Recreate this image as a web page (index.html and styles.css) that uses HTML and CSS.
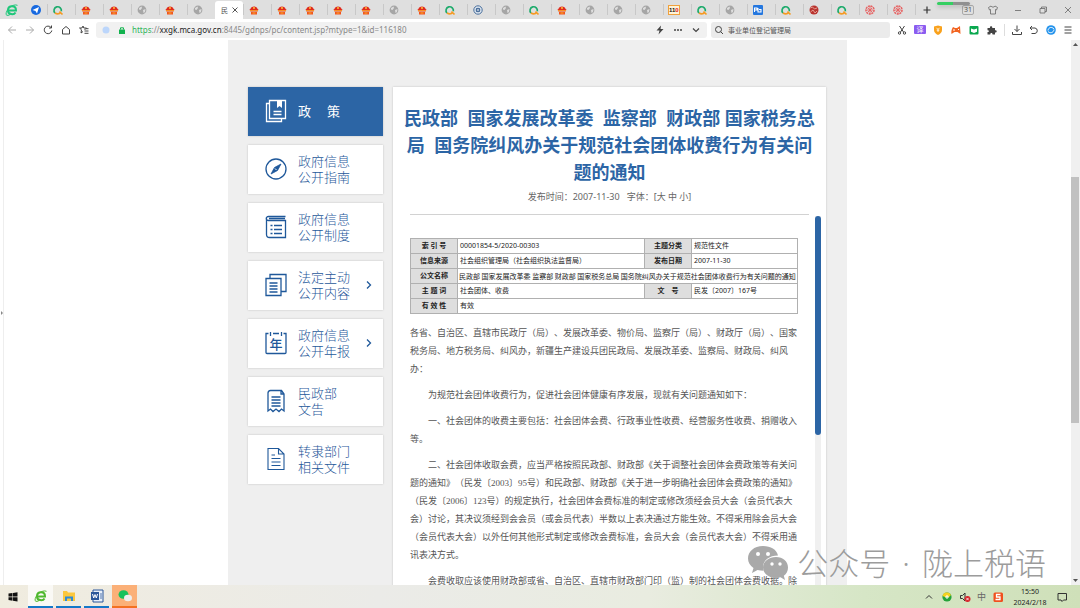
FILE: index.html
```html
<!doctype html>
<html lang="zh-CN">

<head>
  <meta charset="UTF-8" />
  <meta name="viewport" content="width=device-width, initial-scale=1.0" />
  <title>民政部 信息公开</title>
  <link rel="stylesheet" href="styles.css">
</head>

<body>
  <!-- 图标 -->
  <svg class="defs" aria-hidden="true">
    <symbol id="gov" viewBox="0 0 12 12">
      <path d="M2.500 5C2.500 1.500 9.500 1.500 9.500 5L10.500 5.500 9.500 7.500h-7L1.500 5.500Z" fill="#e02a1c" />
      <path d="M3 8h6v2.500H3z" fill="#f0541e" />
      <path d="M2 6.700h8M4.500 9h3" stroke="#ffb62b" stroke-width=".9" />
      <circle cx="6" cy="4" r=".9" fill="#ffd23c" />
    </symbol>
    <symbol id="globe" viewBox="0 0 12 12">
      <circle cx="6" cy="6" r="4.400" fill="#a6a6a6" />
      <path d="M3 4l2.500-1.500L6 4 4.500 6 3 5.500zM7 6l2.500-1L9 8 7.500 9z" fill="#dedede" />
    </symbol>
    <symbol id="query" viewBox="0 0 12 12">
      <path d="M3 9A3.700 3.700 0 1 1 9.300 7.300" fill="none" stroke="#1eab6c" stroke-width="1.700" />
      <path d="M3 9c2 1.300 4.500.9 6-1M7.500 7.500l3 3" fill="none" stroke="#f59a23" stroke-width="1.700" />
    </symbol>
    <symbol id="emblem" viewBox="0 0 12 12">
      <circle cx="6" cy="6" r="4.200" fill="#dce5ef" stroke="#4a6f9c" stroke-width="1" />
      <circle cx="6" cy="6" r="2.300" fill="#295387" />
      <path d="M4.500 6h3M6 4.500v3" stroke="#fff" stroke-width=".7" />
    </symbol>
    <symbol id="card" viewBox="0 0 12 12">
      <rect x="1" y="1" width="10" height="10" rx="1" fill="#2477df" />
      <path d="M2.500 8V4H5v2H3M6 4v4h3V5.500H7" fill="none" stroke="#fff" stroke-width="1.100" />
    </symbol>
    <symbol id="ball" viewBox="0 0 12 12">
      <circle cx="6" cy="6" r="4.500" fill="#b9342f" />
      <path d="M2.500 4l2-1 2 2 2.500-1M2.500 8l2.500-2 2 3 2-2" fill="none" stroke="#e9a89d" stroke-width=".9" />
    </symbol>
    <symbol id="seal" viewBox="0 0 12 12">
      <circle cx="6" cy="6" r="4" fill="none" stroke="#e66262" stroke-width="1.600" stroke-dasharray="2 .7" />
      <path d="M3 6h6M6 2v8M4 4l4 4M8 4L4 8" stroke="#e66262" stroke-width=".9" />
    </symbol>
    <symbol id="browser" viewBox="0 0 14 14">
      <path d="M3 7.400h8C11 2 3 2 3 7.400c0 4.500 6 4.700 7.500 2" fill="none" stroke="currentColor" stroke-width="2" />
      <path d="M1 11.500C1 6 8 .5 12.500 2.300M1 11.500c1 1.500 3 .8 4 0" fill="none" stroke="currentColor" stroke-width="1" />
    </symbol>
    <symbol id="chats" viewBox="0 0 42 36">
      <path d="M16 1C7 1 1 6.500 1 13.500c0 4 2 7 5.500 9.500L5 28l5.500-3c2 .6 4 .8 6 .8C14 17 21 10.500 31 10.500 29.500 4.500 24 1 16 1z" />
      <path d="M29 12c-7 0-13 4.500-13 10.500S22 33 29 33c1.500 0 3-.2 4.500-.7L38 35l-1.200-4.200C39.500 28.800 41 26 41 22.500 41 16.500 36 12 29 12z" />
      <g class="eyes">
        <circle cx="11" cy="9" r="2" />
        <circle cx="21" cy="9" r="2" />
        <circle cx="25" cy="19" r="1.700" />
        <circle cx="33" cy="19" r="1.700" />
      </g>
    </symbol>
    <symbol id="arrow" viewBox="0 0 8 10">
      <path d="M2 1.500L5.500 5 2 8.500" fill="none" stroke="currentColor" stroke-width="1.300" />
    </symbol>
  </svg>

  <header class="browser">
    <div class="tab-bar">
      <svg class="logo"><use href="#browser" /></svg>
      <svg class="pin" viewBox="0 0 12 12"><circle cx="6" cy="6" r="5" fill="#1769e0" /><path d="M2.500 6l6.500-3-2 6.500-1.500-2.500z" fill="#fff" /></svg>
      <nav class="tabs">
        <button class="tab" aria-label="标签"><svg><use href="#query" /></svg></button>
        <button class="tab" aria-label="标签"><svg><use href="#gov" /></svg></button>
        <button class="tab" aria-label="标签"><svg><use href="#gov" /></svg></button>
        <button class="tab" aria-label="标签"><svg><use href="#globe" /></svg></button>
        <button class="tab" aria-label="标签"><svg><use href="#gov" /></svg></button>
        <button class="tab" aria-label="标签"><svg><use href="#globe" /></svg></button>
        <button class="tab active"><span class="tab-title">民</span><svg class="tab-close" viewBox="0 0 8 8"><path d="M2 2l4 4M6 2L2 6" stroke="#555" stroke-width=".8" /></svg></button>
        <button class="tab" aria-label="标签"><svg><use href="#gov" /></svg></button>
        <button class="tab" aria-label="标签"><svg><use href="#gov" /></svg></button>
        <button class="tab" aria-label="标签"><svg><use href="#gov" /></svg></button>
        <button class="tab" aria-label="标签"><svg><use href="#gov" /></svg></button>
        <button class="tab" aria-label="标签"><svg><use href="#gov" /></svg></button>
        <button class="tab" aria-label="标签"><svg><use href="#globe" /></svg></button>
        <button class="tab" aria-label="标签"><svg><use href="#gov" /></svg></button>
        <button class="tab" aria-label="标签"><svg><use href="#query" /></svg></button>
        <button class="tab" aria-label="标签"><svg><use href="#emblem" /></svg></button>
        <button class="tab" aria-label="标签"><svg><use href="#globe" /></svg></button>
        <button class="tab" aria-label="标签"><svg><use href="#query" /></svg></button>
        <button class="tab" aria-label="标签"><svg><use href="#gov" /></svg></button>
        <button class="tab" aria-label="标签"><svg><use href="#globe" /></svg></button>
        <button class="tab" aria-label="标签"><svg><use href="#globe" /></svg></button>
        <button class="tab" aria-label="标签"><svg><use href="#globe" /></svg></button>
        <button class="tab"><span class="police">11<b>0</b></span></button>
        <button class="tab" aria-label="标签"><svg><use href="#query" /></svg></button>
        <button class="tab" aria-label="标签"><svg><use href="#globe" /></svg></button>
        <button class="tab" aria-label="标签"><svg><use href="#card" /></svg></button>
        <button class="tab" aria-label="标签"><svg><use href="#query" /></svg></button>
        <button class="tab" aria-label="标签"><svg><use href="#ball" /></svg></button>
        <button class="tab" aria-label="标签"><svg><use href="#query" /></svg></button>
        <button class="tab" aria-label="标签"><svg><use href="#seal" /></svg></button>
        <button class="tab" aria-label="标签"><svg><use href="#seal" /></svg></button>
        <button class="tab new-tab" aria-label="新标签"><svg viewBox="0 0 12 12"><path d="M6 2.500v7M2.500 6h7" stroke="#333" stroke-width="1.200" /></svg></button>
      </nav>
      <div class="window-tools">
        <span class="count">31</span>
        <svg viewBox="0 0 12 12"><path d="M4 2L1.500 3.500l1 2.500 1-.5V10h5V5.500l1 .5 1-2.500L8 2C7 3.500 5 3.500 4 2z" /></svg>
        <svg viewBox="0 0 12 12"><path d="M3 6.500h6" /></svg>
        <svg viewBox="0 0 12 12"><path d="M3 4.500h5V9H3zM4.500 4.500V3H9.500v4.500H8" /></svg>
        <svg viewBox="0 0 12 12"><path d="M3 3l6 6M9 3L3 9" /></svg>
      </div>
      <span class="speed"></span>
    </div>

    <div class="toolbar">
      <div class="nav-tools">
        <svg class="dim" viewBox="0 0 12 12"><path d="M10 6H2.500M6 2.500L2.500 6 6 9.500" /></svg>
        <svg class="dim" viewBox="0 0 12 12"><path d="M2 6h7.500M6 2.500L9.500 6 6 9.500" /></svg>
        <svg viewBox="0 0 12 12"><path d="M9 3.500a3.800 3.800 0 1 0 .8 3M9.500 1.500V4H7" /></svg>
        <svg viewBox="0 0 12 12"><path d="M2.500 5.500L6 2.500l3.500 3V10h-7z" /></svg>
        <svg viewBox="0 0 12 12"><path d="M5 2l.8 2h2.700L6.500 6M5 2l-1 2H1.500l2 1.800L3 9l2-1.500M6.500 7h4M6.500 9.300h4M8 4.700h2.500" /></svg>
      </div>
      <div class="address">
        <svg viewBox="0 0 12 12"><circle cx="6" cy="6" r="3.500" fill="#bcd6fb" /></svg>
        <svg viewBox="0 0 12 12"><path d="M3 5.500h6V10H3z" fill="#12b24e" /><path d="M4.500 5.500V3.800h3v1.700" fill="none" stroke="#12b24e" /></svg>
        <span class="url"><i>https</i>://<b>xxgk.mca.gov.cn</b>:8445/gdnps/pc/content.jsp?mtype=1&amp;id=116180</span>
        <div class="address-tools">
          <svg viewBox="0 0 12 12"><path d="M7 1.500L2.500 6.500h3L4.500 10.500 9.500 5H6.500z" fill="#444" /></svg>
          <svg viewBox="0 0 12 12"><path d="M2 6h2M5 6h2M8 6h2" stroke="#444" stroke-width="1.500" /></svg>
          <svg viewBox="0 0 12 12"><path d="M3 4.500l3 3 3-3" fill="none" stroke="#444" stroke-width="1.200" /></svg>
        </div>
      </div>
      <label class="search">
        <svg viewBox="0 0 12 12"><circle cx="5.500" cy="5.500" r="3" /><path d="M7.700 7.700L10 10" /></svg>
        <input type="text" value="事业单位登记管理局" aria-label="搜索">
      </label>
      <div class="extensions">
        <svg viewBox="0 0 12 12"><path d="M3.500 2l4 6M8.500 2l-4 6" /><circle cx="3.500" cy="9" r="1.200" /><circle cx="8.500" cy="9" r="1.200" /></svg>
        <span class="translate">译</span>
        <svg viewBox="0 0 12 12"><path d="M6 1.500l4 1v3.500C10 8.500 8 10 6 11 4 10 2 8.500 2 6V2.500z" fill="#f9a11b" stroke="none" /><path d="M4.500 3.800L6 5.500l1.500-1.700M6 5.500V8M4.700 6.200h2.600" stroke="#fff" stroke-width=".8" /></svg>
        <svg viewBox="0 0 12 12"><path d="M3 3l2 1h2l3-2 .5 8-3-2h-3l-3 2C1 8 1.500 5 3 3z" fill="#f26522" stroke="none" /><path d="M3 6h2M8 5.500h1" stroke="#fff" /></svg>
        <svg viewBox="0 0 12 12"><rect x="1.500" y="2" width="9" height="8.500" rx="1" fill="#0aa84f" stroke="none" /><path d="M3 4.500l3 1 3-1v3.300L6 9 3 7.800z" fill="#fff" stroke="none" /></svg>
        <svg viewBox="0 0 12 12"><path d="M1.500 4h2.500c-.8-2.500 3-2.500 2.200 0H9v2.300c2.300-.6 2.300 2.700 0 2.200v2H6.500c.3-2-2.500-2-2.200 0H1.500V8c2 .3 2-2 0-1.800z" fill="#444" stroke="none" /></svg>
      </div>
      <div class="actions">
        <svg viewBox="0 0 12 12"><path d="M6 1.500v6M3.500 5L6 7.500 8.500 5M1.500 8v2.500h9V8" /></svg>
        <svg viewBox="0 0 12 12"><path d="M4 2L2 4l2 2M2 4h5a2.800 2.800 0 0 1 0 5.500H3.500" /></svg>
        <svg viewBox="0 0 12 12"><circle cx="6" cy="6" r="4.800" fill="#2493ec" stroke="none" /><path d="M3 6.500C3.500 3 7 2.500 9 5M9 5.500C8.500 9 5 9.500 3 7.500" stroke="#fff" /></svg>
        <svg viewBox="0 0 12 12"><path d="M2.500 3h7M2.500 6h7M2.500 9h7" /></svg>
      </div>
    </div>
  </header>

  <main class="viewport">
    <div class="handle"><svg viewBox="0 0 4 6"><path d="M1 1l2 2-2 2z" fill="#888" /></svg></div>
    <div class="page">
      <nav class="side">
        <a class="side-item current" href="#">
          <svg viewBox="0 0 22 24"><path d="M4.500 1.500h16v18h-16zM4.500 4.500h-3v18h15v-3M8.500 12.500h8M8.500 15.500h8" /><path d="M12 1.500h5v7.500L14.500 7 12 9z" fill="currentColor" stroke="none" /></svg>
          <span>政<i></i>策</span>
        </a>
        <a class="side-item" href="#">
          <svg viewBox="0 0 22 24"><circle cx="11" cy="12" r="10" /><path d="M16 7l-3.500 6.500L6 17l3.500-6.500z" fill="currentColor" stroke-width=".8" /><path d="M10 11.500l1.500 1.500" stroke="#fff" stroke-width="1" /></svg>
          <span>政府信息<br>公开指南</span>
        </a>
        <a class="side-item" href="#">
          <svg viewBox="0 0 22 24"><path d="M20.500 1.500h-17c-3 0-3 4 0 4h17v17h-16c-2 0-3-1-3-3v-16M4 3.500h16M5.500 10.500h2M9 10.500h8M5.500 14.500h2M9 14.500h8M5.500 18.500h2M9 18.500h8" /></svg>
          <span>政府信息<br>公开制度</span>
        </a>
        <a class="side-item" href="#">
          <svg viewBox="0 0 22 24"><path d="M1 5.500h15v17H1zM5 5.500v-4h16v17h-5M4.500 10h8M4.500 13h8M4.500 16h8M4.500 19h8" /></svg>
          <span>法定主动<br>公开内容</span>
          <svg class="more"><use href="#arrow" /></svg>
        </a>
        <a class="side-item" href="#">
          <svg viewBox="0 0 22 24"><path d="M3.500 2.500H1v19q0 1 1 1h18q1 0 1-1v-19h-2.500M8 2.500h6M5.500 1v4M16.500 1v4" /><text class="year" x="11" y="18" text-anchor="middle">年</text></svg>
          <span>政府信息<br>公开年报</span>
          <svg class="more"><use href="#arrow" /></svg>
        </a>
        <a class="side-item" href="#">
          <svg viewBox="0 0 22 24"><path d="M3 22V4q0-2.500 2.500-2.500h11L19 5v17l-2.500-2-2.500 2.500-3-2.500-3 2.500L5.500 20zM16 1.500V5h3M6.500 8h9M6.500 11h9M6.500 14h9M6.500 17h9" /></svg>
          <span>民政部<br>文告</span>
        </a>
        <a class="side-item" href="#">
          <svg class="thin" viewBox="0 0 22 24"><path d="M3 1.500h10.500L19 7v15.500H3zM13.500 1.500V7H19M6.500 8H10M6.500 11.500h9M6.500 15h9M6.500 18.500h9" /></svg>
          <span>转隶部门<br>相关文件</span>
        </a>
      </nav>

      <article class="article">
        <h1>民政部&nbsp; 国家发展改革委&nbsp; 监察部&nbsp; 财政部 国家税务总局&nbsp; 国务院纠风办关于规范社会团体收费行为有关问题的通知</h1>
        <p class="meta"><span>发布时间：2007-11-30</span><span>字体：[<a href="#">大</a> <a href="#">中</a> <a href="#">小</a>]</span></p>
        <div class="content">
          <div class="text">
            <table>
              <colgroup>
                <col class="c-label">
                <col>
                <col class="c-label">
                <col class="c-value">
              </colgroup>
              <tr>
                <th>索 引 号</th>
                <td>00001854-5/2020-00303</td>
                <th>主题分类</th>
                <td>规范性文件</td>
              </tr>
              <tr>
                <th>信息来源</th>
                <td>社会组织管理局（社会组织执法监督局）</td>
                <th>发布日期</th>
                <td>2007-11-30</td>
              </tr>
              <tr>
                <th>公文名称</th>
                <td class="name" colspan="3">民政部 国家发展改革委 监察部 财政部 国家税务总局 国务院纠风办关于规范社会团体收费行为有关问题的通知</td>
              </tr>
              <tr>
                <th>主 题 词</th>
                <td>社会团体、收费</td>
                <th>文&emsp;号</th>
                <td>民发〔2007〕167号</td>
              </tr>
              <tr>
                <th>有 效 性</th>
                <td colspan="3">有效</td>
              </tr>
            </table>
            <p class="to">各省、自治区、直辖市民政厅（局）、发展改革委、物价局、监察厅（局）、财政厅（局）、国家税务局、地方税务局、纠风办，新疆生产建设兵团民政局、发展改革委、监察局、财政局、纠风办：</p>
            <p>为规范社会团体收费行为，促进社会团体健康有序发展，现就有关问题通知如下：</p>
            <p>一、社会团体的收费主要包括：社会团体会费、行政事业性收费、经营服务性收费、捐赠收入等。</p>
            <p>二、社会团体收取会费，应当严格按照民政部、财政部《关于调整社会团体会费政策等有关问题的通知》（民发〔2003〕95号）和民政部、财政部《关于进一步明确社会团体会费政策的通知》（民发〔2006〕123号）的规定执行，社会团体会费标准的制定或修改须经会员大会（会员代表大会）讨论，其决议须经到会会员（或会员代表）半数以上表决通过方能生效。不得采用除会员大会（会员代表大会）以外任何其他形式制定或修改会费标准，会员大会（会员代表大会）不得采用通讯表决方式。</p>
            <p>会费收取应该使用财政部或省、自治区、直辖市财政部门印（监）制的社会团体会费收据。除</p>
          </div>
          <div class="track"><div class="thumb"></div></div>
        </div>
      </article>
    </div>
    <div class="scrollbar">
      <svg viewBox="0 0 9 9"><path d="M2 6l2.500-3L7 6z" /></svg>
      <div class="scroll-thumb"></div>
      <svg viewBox="0 0 9 9"><path d="M2 3l2.500 3L7 3z" /></svg>
    </div>
    <div class="watermark">
      <svg><use href="#chats" /></svg>
      <span>公众号<i> · </i>陇上税语</span>
    </div>
  </main>

  <footer class="taskbar">
    <button class="task" aria-label="开始"><svg viewBox="0 0 14 14"><path d="M2.500 3.500l4-.5v3.500h-4zM7 3l4.500-.7v4.200H7zM2.500 7.200h4v3.500l-4-.6zM7 7.200h4.500v4.200L7 10.800z" fill="#111" /></svg></button>
    <button class="task open lit" aria-label="浏览器"><svg class="green"><use href="#browser" /></svg></button>
    <button class="task open" aria-label="文件"><svg viewBox="0 0 14 14"><path d="M1 2h4l1 1.500h7V12H1z" fill="#fbc73d" /><path d="M3 7.500h8V12H9V9.500H5V12H3z" fill="#2d8bd8" /></svg></button>
    <button class="task open" aria-label="文档"><svg viewBox="0 0 14 14"><path d="M3 1h10v12H3z" fill="#e8f0fa" stroke="#2b579a" /><path d="M1 3h8v8H1z" fill="#2b579a" /><path d="M2.500 5l1.200 4L5 5.500 6.300 9l1.200-4" fill="none" stroke="#fff" /><path d="M10 5h2M10 7h2M10 9h2" stroke="#2b579a" stroke-width=".8" /></svg></button>
    <button class="task open chat" aria-label="微信"><svg viewBox="0 0 14 14"><ellipse cx="5.500" cy="5.500" rx="5" ry="4.300" fill="#18c15c" /><ellipse cx="10" cy="9" rx="4" ry="3.300" fill="#eee" /></svg></button>
    <div class="tray">
      <svg viewBox="0 0 12 12"><path d="M3 7.500l3-3 3 3" fill="none" stroke="#333" /></svg>
      <svg viewBox="0 0 12 12"><circle cx="6" cy="6" r="4.600" fill="#24a33a" /><path d="M1.500 5A4.600 4.600 0 0 1 10 4L8 6H4z" fill="#f6d220" /><path d="M6 4v4M4 6h4" stroke="#fff" /></svg>
      <svg viewBox="0 0 12 12"><path d="M1.500 4.500H3.500L6 2v8L3.500 7.500h-2z" fill="none" stroke="#333" /><circle cx="8.500" cy="8" r="3" fill="#d8232a" /><path d="M7.300 6.800l2.400 2.400M9.700 6.800L7.300 9.200" stroke="#fff" stroke-width=".8" /></svg>
      <span class="ime">中</span>
      <svg viewBox="0 0 12 12"><rect x="1.500" y="1.500" width="9.500" height="9.500" rx="1.500" fill="#f0501e" /><path d="M8.500 3.500H4.500v2.500h3.500v2.500H3.500" fill="none" stroke="#fff" stroke-width="1.300" /></svg>
      <div class="clock">15:50<br>2024/2/18</div>
      <svg viewBox="0 0 12 12"><path d="M2 2.500h8.500v6.500H7.500L6 10.500 5 9H2z" fill="none" stroke="#333" /></svg>
    </div>
  </footer>
</body>

</html>
```

FILE: styles.css
```css
* {
  box-sizing: border-box;
}

body {
  margin: 0;
  height: 100vh;
  display: flex;
  flex-direction: column;
  overflow: hidden;
  background: #fff;
  color: #333;
  font-family: "Noto Sans", "Noto Sans CJK SC", sans-serif;
  text-spacing-trim: space-all;
}

svg {
  display: block;
  flex: none;
  width: 12px;
  height: 12px;
}

button {
  border: 0;
  padding: 0;
  background: none;
  font-family: inherit;
}

a {
  color: inherit;
  text-decoration: none;
}

i {
  font-style: normal;
}

.defs {
  position: absolute;
  width: 0;
  height: 0;
}

/* 标签栏 */
.tab-bar {
  position: relative;
  display: flex;
  align-items: center;
  height: 19px;
  padding-left: 5px;
  background: #dfdfdf;
}

.logo {
  width: 14px;
  height: 14px;
  color: #1fc77a;
}

.pin {
  margin: 0 5px 0 11px;
}

.tabs {
  display: flex;
  align-self: stretch;
}

.tab {
  display: flex;
  align-items: center;
  width: 28px;
  padding-left: 5px;
  background: linear-gradient(#c8c8c8, #c8c8c8) left center / 1px 11px no-repeat;
}

.tab.active {
  align-self: flex-end;
  height: 18px;
  gap: 2px;
  padding-left: 6px;
  background: #fff;
  border-radius: 3px 3px 0 0;
}

.tab-title {
  color: #555;
  font-size: 7px;
}

.tab .tab-close {
  width: 10px;
  height: 10px;
}

.new-tab {
  padding-left: 6px;
}

.police {
  border: 1px solid #f0a13c;
  background: #fff3d8;
  color: #111;
  font: bold 6px/8px "Liberation Sans", sans-serif;
}

.police b {
  color: #e01818;
}

.window-tools {
  display: flex;
  align-items: center;
  gap: 13px;
  margin-left: auto;
  padding-right: 6px;
}

.window-tools svg {
  fill: none;
  stroke: #666;
  stroke-width: 0.8;
}

.count {
  padding: 0 1px;
  border: 1px solid #aaa;
  border-radius: 2px;
  color: #555;
  font-size: 7px;
  line-height: 8px;
}

.speed {
  position: absolute;
  top: 2px;
  right: 110px;
  width: 33px;
  height: 3px;
  border-radius: 2px;
  background: linear-gradient(90deg, #35cf62 50%, #909090 50%);
  box-shadow: 0 2px 4px rgba(0, 0, 0, 0.2);
}

/* 地址栏 */
.toolbar {
  display: flex;
  align-items: center;
  height: 21px;
  padding: 0 6px;
}

.nav-tools {
  display: flex;
  gap: 6px;
  margin-right: 6px;
}

.nav-tools svg,
.search svg,
.extensions svg,
.actions svg {
  fill: none;
  stroke: #444;
}

.nav-tools .dim {
  stroke: #aaa;
}

.address {
  flex: 1;
  display: flex;
  align-items: center;
  gap: 4px;
  height: 16px;
  padding: 0 5px 0 4px;
  border-radius: 3px;
  background: #f1f1f1;
}

.url {
  color: #888;
  font-size: 8px;
  line-height: 12px;
  white-space: nowrap;
}

.url i {
  color: #2fb55c;
}

.url b {
  color: #222;
  font-weight: normal;
}

.address-tools {
  display: flex;
  gap: 6px;
  margin-left: auto;
}

.search {
  display: flex;
  align-items: center;
  gap: 3px;
  width: 179px;
  height: 16px;
  margin-left: 4px;
  padding-left: 2px;
  border-radius: 3px;
  background: #ebebeb;
}

.search input {
  flex: 1;
  min-width: 0;
  padding: 0;
  border: 0;
  background: none;
  color: #555;
  font-family: inherit;
  font-size: 7px;
}

.extensions {
  display: flex;
  align-items: center;
  gap: 6px;
  margin-left: 6px;
  padding-right: 6px;
  border-right: 1px solid #ddd;
}

.translate {
  width: 12px;
  height: 9px;
  border-radius: 1px;
  background: #8b5cf0;
  color: #fff;
  font-size: 7px;
  line-height: 9px;
  text-align: center;
}

.actions {
  display: flex;
  gap: 5px;
  margin-left: 6px;
}

/* 页面 */
.viewport {
  position: relative;
  flex: 1;
  min-height: 0;
  display: flex;
  overflow: hidden;
}

.handle {
  display: flex;
  align-items: center;
  width: 4px;
  border-right: 1px solid #eee;
}

.handle svg {
  width: 4px;
  height: 6px;
}

.page {
  flex: 1;
  display: flex;
  align-items: flex-start;
  gap: 10px;
  max-width: 619px;
  height: max-content;
  margin: 0 auto;
  padding: 47px 21px 0 20px;
  background: #efefef;
}

.side {
  flex: none;
  width: 135px;
}

.side-item {
  display: flex;
  align-items: center;
  gap: 11px;
  height: 49px;
  margin-bottom: 9px;
  padding: 0 10px 2px 17px;
  background: #fff;
  box-shadow: 0 0 2px rgba(0, 0, 0, 0.2);
  color: #1f589a;
  font-size: 13px;
  font-weight: 300;
  line-height: 16px;
}

.side-item svg {
  width: 22px;
  height: 24px;
  fill: none;
  stroke: currentColor;
  stroke-width: 1.3;
}

.side-item .thin {
  stroke-width: 1.1;
}

.side-item .more {
  width: 8px;
  height: 10px;
  margin-left: auto;
}

.side-item i {
  display: inline-block;
  width: 16px;
}

.year {
  fill: currentColor;
  stroke: none;
  font-size: 13px;
  font-weight: 500;
}

.side-item.current {
  background: #2c65a5;
  color: #fff;
  font-weight: 400;
}

.article {
  flex: 1;
  padding: 18px 5px 0 10px;
  background: #fff;
  box-shadow: 0 0 2px rgba(0, 0, 0, 0.2);
}

h1 {
  margin: 0 5px 0 0;
  color: #2c65a5;
  font-family: "Noto Sans", "Noto Sans CJK SC", sans-serif;
  font-size: 18px;
  line-height: 27px;
  text-align: center;
}

.meta {
  display: flex;
  justify-content: center;
  gap: 7px;
  margin: 0 12px 0 7px;
  height: 29px;
  border-bottom: 1px solid #d2d2d2;
  color: #666;
  font-size: 9px;
  line-height: 22px;
}

.content {
  display: flex;
  gap: 17px;
  padding-left: 7px;
}

.text {
  flex: 1;
  padding-top: 23px;
  color: #555;
  font-family: "Liberation Serif", "Noto Sans CJK SC", sans-serif;
  font-size: 9px;
  line-height: 18px;
}

.text p {
  margin: 0 0 8px;
  text-indent: 2em;
}

.text .to {
  text-indent: 0;
}

table {
  width: 100%;
  margin-bottom: 10px;
  border-collapse: collapse;
  table-layout: fixed;
  color: #222;
  font-family: "Noto Sans", "Noto Sans CJK SC", sans-serif;
  font-size: 7px;
  line-height: 14px;
}

.c-label {
  width: 47px;
}

.c-value {
  width: 106px;
}

th,
td {
  padding: 0 0 0 2px;
  border: 1px solid #b0b0b0;
  text-align: left;
  white-space: nowrap;
}

th {
  padding: 0;
  background: #dedede;
  text-align: center;
}

.name {
  padding-left: 1px;
  font-family: "Noto Sans CJK SC", sans-serif;
}

.track {
  width: 6px;
  margin-top: 1px;
  background: #f0f0f0;
}

.thumb {
  height: 219px;
  border-radius: 3px;
  background: #2c65a5;
}

.scrollbar {
  display: flex;
  flex-direction: column;
  justify-content: space-between;
  width: 9px;
  background: #f0f0f0;
}

.scrollbar svg {
  width: 9px;
  height: 9px;
  fill: #555;
}

.scroll-thumb {
  height: 45%;
  margin: 0 1px 25px 0;
  background: #c1c1c1;
}

.watermark {
  position: absolute;
  right: 34px;
  bottom: 4px;
  display: flex;
  align-items: center;
  gap: 8px;
  color: #9c9c9c;
  font-size: 31px;
  font-weight: 300;
  line-height: 36px;
  white-space: nowrap;
}

.watermark svg {
  width: 42px;
  height: 36px;
  fill: #a9a9a9;
}

.watermark i {
  padding: 0 4px;
}

.watermark .eyes,
.eyes {
  fill: #fff;
}

/* 任务栏 */
.taskbar {
  display: flex;
  gap: 3px;
  height: 23px;
  background: linear-gradient(90deg, #f0ecdf, #ebebe8 35%, #e9ece0 60%, #d6e6c6 80%, #cfe0b9);
}

.task {
  display: flex;
  align-items: center;
  justify-content: center;
  width: 25px;
}

.task svg {
  width: 14px;
  height: 14px;
}

.task .green {
  color: #4fb82e;
}

.open {
  border-bottom: 2px solid #1478c8;
}

.lit {
  background: #faf9f5;
}

.chat {
  border-color: #f37021;
  background: #fbb078;
}

.tray {
  display: flex;
  align-items: center;
  gap: 6px;
  margin-left: auto;
  padding-right: 12px;
}

.ime {
  color: #666;
  font-size: 9px;
  line-height: 12px;
}

.clock {
  width: 40px;
  color: #222;
  font-size: 7px;
  line-height: 11px;
  text-align: center;
}
```
